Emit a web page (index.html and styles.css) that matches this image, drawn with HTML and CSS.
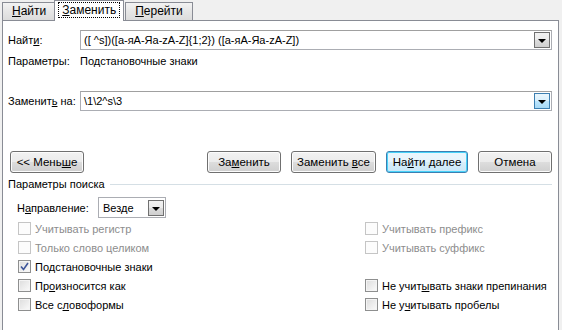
FILE: index.html
```html
<!DOCTYPE html>
<html lang="ru">
<head>
    <meta charset="UTF-8">
    <title>Найти и заменить</title>
    <link rel="stylesheet" href="styles.css">
</head>
<body>
    <div class="tabs">
        <div class="tab"><u>Н</u>айти</div>
        <div class="tab active"><span class="focus"><u>З</u>аменить</span></div>
        <div class="tab"><u>П</u>ерейти</div>
    </div>
    <div class="panel">
        <div class="row find-row">
            <span class="label">Найт<u>и</u>:</span>
            <div class="combo">
                <span class="value">([ ^s])([а-яА-Яa-zA-Z]{1;2}) ([а-яА-Яa-zA-Z])</span>
                <span class="drop"><i class="arrow"></i></span>
            </div>
        </div>
        <div class="row params-row">
            <span class="label">Параметры:</span>
            <span>Подстановочные знаки</span>
        </div>
        <div class="row replace-row">
            <span class="label">Заменит<u>ь</u> на:</span>
            <div class="combo">
                <span class="value">\1\2^s\3</span>
                <span class="drop hot"><i class="arrow"></i></span>
            </div>
        </div>
        <div class="buttons">
            <button class="btn less">&lt;&lt; Мень<u>ш</u>е</button>
            <div class="right-buttons">
                <button class="btn w74">За<u>м</u>енить</button>
                <button class="btn w85">Заменить <u>в</u>се</button>
                <button class="btn w82 default">На<u>й</u>ти далее</button>
                <button class="btn w74">Отмена</button>
            </div>
        </div>
        <div class="group-title">
            <span>Параметры поиска</span>
            <span class="line"></span>
        </div>
        <div class="direction">
            <span class="dir-label">Н<u>а</u>правление:</span>
            <div class="select">
                <span class="value">Везде</span>
                <span class="drop"><i class="arrow"></i></span>
            </div>
        </div>
        <div class="options">
            <label class="opt disabled"><span class="box"></span><span>Учитывать регистр</span></label>
            <label class="opt disabled"><span class="box"></span><span>Учитывать префикс</span></label>
            <label class="opt disabled"><span class="box"></span><span>Только слово целиком</span></label>
            <label class="opt disabled"><span class="box"></span><span>Учитывать суффикс</span></label>
            <label class="opt"><span class="box">
                <svg width="9" height="9" viewBox="0 0 9 9"><path d="M1 4.5 L3.5 7.5 L8 1" fill="none" stroke="#3d5599" stroke-width="1.6"/></svg>
            </span><span>По<u>д</u>становочные знаки</span></label>
            <span></span>
            <label class="opt"><span class="box"></span><span>Пр<u>о</u>износится как</span></label>
            <label class="opt"><span class="box"></span><span>Не учит<u>ы</u>вать знаки препинания</span></label>
            <label class="opt"><span class="box"></span><span>Все с<u>л</u>овоформы</span></label>
            <label class="opt"><span class="box"></span><span>Не у<u>ч</u>итывать пробелы</span></label>
        </div>
    </div>
</body>
</html>
```

FILE: styles.css
```css
body {
    margin: 0;
    height: 100vh;
    display: flex;
    flex-direction: column;
    background-color: #f0f0f0;
    font-family: "Liberation Sans", Arial, sans-serif;
    font-size: 11px;
    color: #000;
    overflow: hidden;
}
u {
    text-decoration: underline;
    text-underline-offset: 1px;
}
.tabs {
    display: flex;
    align-items: flex-end;
    height: 20px;
    padding-left: 2px;
    flex: none;
}
.tab {
    height: 17px;
    line-height: 17px;
    padding: 0 9px;
    border: 1px solid #898c95;
    border-bottom: none;
    background: linear-gradient(#f3f3f3, #e6e6e6 50%, #dcdcdc);
    font-size: 12px;
    margin-right: -1px;
}
.tab.active {
    height: 20px;
    line-height: 19px;
    background: #fff;
    position: relative;
    z-index: 1;
    margin: 0 1px 0 -1px;
    padding: 0 3px;
    bottom: -1px;
}
.focus {
    border: 1px dotted #000;
    padding: 0 3px;
}
.panel {
    flex: 1;
    background: #fff;
    border: 1px solid #898c95;
    border-bottom: none;
    margin: 0 3px 0 2px;
    padding: 0 5px;
}
.row {
    display: flex;
    align-items: center;
}
.label {
    width: 72px;
    flex: none;
}
.find-row {
    margin-top: 9px;
    height: 20px;
}
.params-row {
    height: 20px;
    margin-top: 1px;
}
.replace-row {
    margin-top: 20px;
    height: 20px;
}
.combo {
    flex: 1;
    height: 18px;
    border: 1px solid #abadb3;
    border-top-color: #a0a0a0;
    display: flex;
    align-items: center;
    margin-right: 1px;
}
.combo .value {
    flex: 1;
    padding-left: 3px;
    white-space: pre;
}
.drop {
    width: 16px;
    height: 16px;
    margin-right: 1px;
    box-sizing: border-box;
    border: 1px solid #707070;
    background: linear-gradient(#f2f2f2, #ebebeb 50%, #dddddd 50%, #cfcfcf);
    display: flex;
    align-items: center;
    justify-content: center;
}
.drop.hot {
    border-color: #3c7fb1;
    background: linear-gradient(#eaf6fd, #d9f0fc 50%, #bee6fd 50%, #a7d9f5);
}
.arrow {
    width: 0;
    height: 0;
    border-left: 4px solid transparent;
    border-right: 4px solid transparent;
    border-top: 4px solid #000;
    margin-top: 2px;
}
.buttons {
    display: flex;
    justify-content: space-between;
    margin-top: 40px;
    padding-left: 2px;
    padding-right: 1px;
}
.right-buttons {
    display: flex;
    gap: 10px;
}
.btn {
    height: 22px;
    width: 74px;
    padding: 0;
    border: 1px solid #707070;
    border-radius: 3px;
    background: linear-gradient(#f2f2f2, #ebebeb 50%, #dddddd 50%, #cfcfcf);
    box-shadow: inset 0 0 0 1px #fcfcfc;
    font-family: inherit;
    font-size: 11.5px;
    color: #000;
}
.w74 { width: 74px; }
.w85 { width: 85px; }
.w82 { width: 82px; }
.btn.default {
    border-color: #3c7fb1;
    box-shadow: inset 0 0 0 1px #48d2f9;
    background: linear-gradient(#eaf6fd, #e6f4fc 50%, #d8eefa 50%, #c9e7f8);
}
.group-title {
    display: flex;
    align-items: center;
    gap: 5px;
    margin-top: 3px;
    height: 16px;
}
.line {
    flex: 1;
    height: 1px;
    background: #d5dfe5;
    margin-right: 1px;
}
.direction {
    display: flex;
    align-items: center;
    height: 21px;
    margin-top: 5px;
    padding-left: 9px;
}
.dir-label {
    width: 81px;
}
.select {
    width: 66px;
    height: 19px;
    border: 1px solid #abadb3;
    display: flex;
    align-items: center;
}
.select .value {
    flex: 1;
    padding-left: 4px;
}
.options {
    display: grid;
    grid-template-columns: 347px 1fr;
    grid-auto-rows: 19px;
    margin-top: 1px;
    padding-left: 10px;
}
.opt {
    display: flex;
    align-items: center;
    gap: 4px;
}
.box {
    width: 13px;
    height: 13px;
    box-sizing: border-box;
    border: 1px solid #8e8f8f;
    background: linear-gradient(135deg, #dcdcdc, #fbfbfb);
    box-shadow: inset 0 0 0 1px #f4f4f4;
    display: flex;
    align-items: center;
    justify-content: center;
    flex: none;
}
.opt.disabled {
    color: #8d8d8d;
}
.opt.disabled .box {
    border-color: #c5c5c5;
    background: #fcfcfc;
    box-shadow: none;
}
```
